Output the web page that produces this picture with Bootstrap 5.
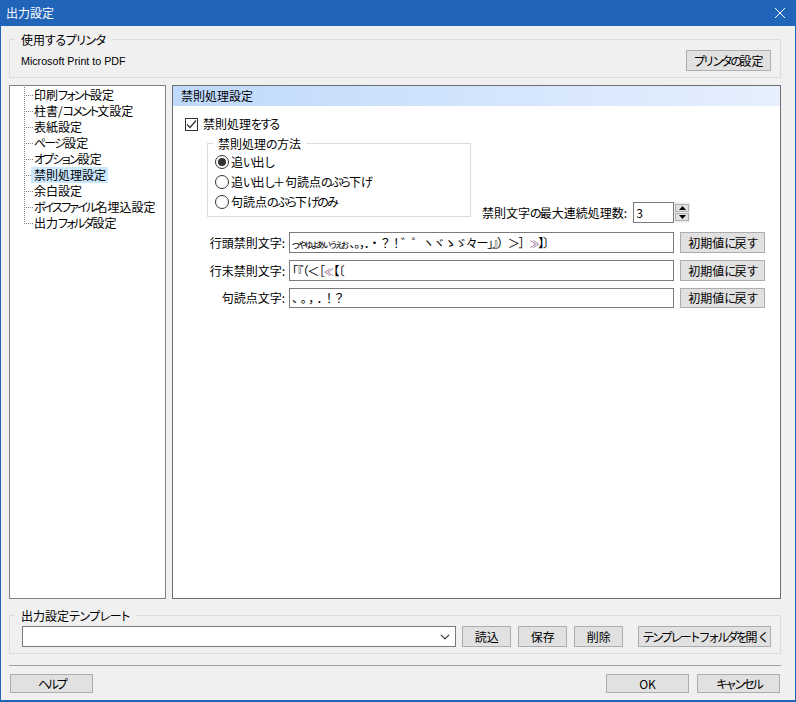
<!DOCTYPE html>
<html lang="ja">
<head>
    <meta charset="UTF-8" />
    <meta name="viewport" content="width=device-width, initial-scale=1.0" />
    <title>出力設定</title>
    <link href="https://cdn.jsdelivr.net/npm/bootstrap@5.3.3/dist/css/bootstrap.min.css" rel="stylesheet" />
    <style>
        html, body {
            margin: 0;
            height: 100%;
            overflow: hidden;
        }
        body {
            font-family: "Noto Sans CJK JP", "Liberation Sans", sans-serif;
            font-size: 12px;
            line-height: 16px;
            color: #000;
            background-color: #f0f0f0;
            font-feature-settings: "palt";
        }
        .kn {
            letter-spacing: -1.8px;
        }
        legend .kn {
            letter-spacing: -0.5px;
        }
        .btn-printer .kn {
            letter-spacing: -2.8px;
        }
        .btn-low .kn {
            letter-spacing: -3px;
        }
        .tmpl-wide .kn {
            letter-spacing: -2.6px;
        }
        .dlg-window {
            width: 796px;
            height: 702px;
            background-color: #f0f0f0;
            border: solid #2165b8;
            border-width: 0 1px 2px 1px;
        }
        .dlg-title {
            height: 26px;
            flex: none;
            margin: 0 -1px;
            padding: 0 11px 0 6px;
            background-color: #2165b8;
            color: #fff;
        }
        .dlg-body {
            flex: 1;
            min-height: 0;
            padding: 5px 14px 7px 8px;
        }
        .grp-box {
            min-width: 0;
            border: 1px solid #dcdcdc;
            padding: 0 9px 6px 12px;
        }
        .grp-box legend {
            float: none;
            width: auto;
            height: 16px;
            margin: 0 0 0 -7px;
            padding: 0 6px;
            font-size: 12px;
            line-height: 18px;
        }
        .grp-printer .btn-win {
            margin-top: 3px;
        }
        .print-name {
            margin: 6px 0 0 -1px;
            font-family: "Liberation Sans", sans-serif;
            font-size: 10.7px;
        }
        .btn-win {
            height: 21px;
            padding: 0;
            font-size: 12px;
            line-height: 19px;
            color: #000;
            background-color: #e1e1e1;
            border: 1px solid #adadad;
            border-radius: 0;
            white-space: nowrap;
        }
        .btn-win:hover {
            color: #000;
            background-color: #e1e1e1;
            border-color: #adadad;
        }
        .btn-printer {
            width: 85px;
        }
        .btn-low {
            height: 19px;
            line-height: 17px;
            width: 83px;
        }
        .panes {
            flex: 1;
            min-height: 0;
            margin-top: 7px;
            gap: 6px;
        }
        .pane-tree {
            width: 157px;
            flex: none;
            background-color: #fff;
            border: 1px solid #828282;
        }
        .tree-list {
            margin: 1px 0 0 14px;
            padding: 0;
            list-style: none;
        }
        .tree-list li {
            height: 16px;
            display: flex;
            align-items: center;
            background: repeating-linear-gradient(#808080 0 1px, transparent 1px 2px) no-repeat 0 0 / 1px 100%;
        }
        .tree-list li:last-child {
            background-size: 1px 50%;
        }
        .tree-list li::before {
            content: "";
            width: 9px;
            flex: none;
            border-top: 1px dotted #808080;
        }
        .tree-list li > span {
            padding: 0 2px 0 1px;
            white-space: nowrap;
        }
        .tree-list .on {
            background-color: #cce8ff;
            margin-left: -2px;
            padding-left: 3px;
        }
        .pane-main {
            flex: 1;
            background-color: #fff;
            border: 1px solid #6e6e6e;
        }
        .pane-head {
            height: 20px;
            padding-left: 8px;
            line-height: 20px;
            background: linear-gradient(to right, #bfd9fb, #e6f0fe);
        }
        .chk-row {
            margin: 12px 0 0 12px;
            height: 13px;
            gap: 5px;
        }
        .chk-row > span {
            margin-bottom: 2px;
        }
        .form-check-input.chk-box {
            width: 13px;
            height: 13px;
            margin: 0;
            flex: none;
            background-color: #fff;
            border: 1px solid #333;
            border-radius: 0;
            background-size: 13px;
            background-image: url("data:image/svg+xml,%3csvg xmlns='http://www.w3.org/2000/svg' viewBox='0 0 13 13'%3e%3cpath fill='none' stroke='%23333' stroke-width='1.2' d='M2 6.5l3 3 6-7'/%3e%3c/svg%3e");
        }
        .grp-method {
            width: 264px;
            flex: none;
            margin: 4px 0 6px 34px;
            padding: 0 8px 4px 7px;
            background-color: #fff;
        }
        .grp-method legend {
            margin-left: -2px;
            padding: 0 5px;
        }
        .radio-row {
            height: 20px;
            gap: 2px;
        }
        .radio-row:first-of-type {
            margin-top: 1px;
        }
        .form-check-input.rad-btn {
            width: 14px;
            height: 14px;
            margin: 0;
            flex: none;
            background-color: #fff;
            border: 1px solid #333;
            background-size: 14px;
            background-image: none;
        }
        .form-check-input.rad-btn:checked {
            background-image: url("data:image/svg+xml,%3csvg xmlns='http://www.w3.org/2000/svg' viewBox='0 0 14 14'%3e%3ccircle cx='7' cy='7' r='4' fill='%23333'/%3e%3c/svg%3e");
        }
        .spin-group {
            margin: 0 0 0 11px;
            gap: 6px;
        }
        .spin-input {
            width: 41px;
            height: 21px;
            flex: none;
        }
        .box-field {
            height: 21px;
            padding: 0 2px;
            font-size: 12px;
            line-height: 19px;
            color: #000;
            background-color: #fff;
            border: 1px solid #7a7a7a;
            border-radius: 0;
            white-space: nowrap;
            overflow: hidden;
        }
        .spin-btns {
            width: 16px;
            height: 21px;
            margin-left: -6px;
            padding: 2px 1px;
            background-color: #f0f0f0;
            gap: 1px;
        }
        .spin-btns span {
            flex: 1;
            background-color: #e1e1e1;
            border: 1px solid #adadad;
        }
        .txt-rows {
            margin: 9px 15px 0 0;
            gap: 7px;
        }
        .txt-label {
            width: 112px;
            flex: none;
            text-align: right;
        }
        .txt-row {
            gap: 4px;
        }
        .txt-row .box-field {
            flex: 1;
            min-width: 0;
        }
        .txt-row .btn-win {
            width: 85px;
            flex: none;
            margin-left: 2px;
        }
        .txt-row-low .box-field,
        .txt-row-low .btn-win {
            height: 20px;
            line-height: 18px;
        }
        .kana-small {
            font-size: 10px;
            letter-spacing: -1.7px;
            margin-right: 2px;
        }
        .punct-wide {
            font-feature-settings: normal;
            letter-spacing: -1.2px;
        }
        .brackets {
            letter-spacing: -0.8px;
        }
        .punct-open {
            letter-spacing: 2.5px;
        }
        .mark-tint {
            font-size: 10px;
            color: #8a5a80;
        }
        .grp-template {
            margin-top: 8px;
            padding: 3px 9px 6px 12px;
        }
        .tmpl-select {
            width: 435px;
            height: 21px;
            margin-right: -1px;
            padding: 0 20px 0 4px;
            font-size: 12px;
            border: 1px solid #7a7a7a;
            border-radius: 0;
            background-size: 12px 10px;
            background-position: right 4px center;
        }
        .tmpl-gap {
            gap: 7px;
        }
        .tmpl-btn {
            width: 49px;
            flex: none;
        }
        .tmpl-wide {
            width: 133px;
            margin-left: 8px;
        }
        .sep-line {
            margin: 11px 0 8px;
            opacity: 1;
            border: 0;
            border-top: 1px solid #a0a0a0;
            flex: none;
        }
        .foot-row {
            padding: 0 1px;
        }
    </style>
</head>
<body>
    <div class="dlg-window d-flex flex-column">
        <div class="dlg-title d-flex align-items-center justify-content-between">
            <span>出力設定</span>
            <svg width="10" height="10" viewBox="0 0 10 10"><path d="M0 0L10 10M10 0L0 10" stroke="#fff" stroke-width="1" fill="none"/></svg>
        </div>

        <div class="dlg-body d-flex flex-column">
            <fieldset class="grp-box grp-printer flex-none">
                <legend>使用するプリンタ</legend>
                <div class="d-flex justify-content-between align-items-start">
                    <span class="print-name">Microsoft Print to PDF</span>
                    <button type="button" class="btn btn-win btn-printer">プリンタの設定</button>
                </div>
            </fieldset>

            <div class="panes d-flex">
                <div class="pane-tree">
                    <ul class="tree-list" id="tree"></ul>
                </div>
                <div class="pane-main d-flex flex-column">
                    <div class="pane-head">禁則処理設定</div>
                    <div class="chk-row d-flex align-items-center">
                        <input class="form-check-input chk-box" type="checkbox" checked />
                        <span>禁則処理をする</span>
                    </div>
                    <div class="d-flex align-items-end">
                        <fieldset class="grp-box grp-method">
                            <legend>禁則処理の方法</legend>
                            <div class="radio-row d-flex align-items-center"><input class="form-check-input rad-btn" type="radio" name="m" checked /><span>追い出し</span></div>
                            <div class="radio-row d-flex align-items-center"><input class="form-check-input rad-btn" type="radio" name="m" /><span>追い出し＋句読点のぶら下げ</span></div>
                            <div class="radio-row d-flex align-items-center"><input class="form-check-input rad-btn" type="radio" name="m" /><span>句読点のぶら下げのみ</span></div>
                        </fieldset>
                        <div class="spin-group d-flex align-items-center">
                            <span>禁則文字の最大連続処理数:</span>
                            <div class="box-field spin-input">3</div>
                            <div class="spin-btns d-flex flex-column">
                                <span class="d-flex align-items-center justify-content-center"><svg width="7" height="4" viewBox="0 0 7 4"><path d="M3.5 0L7 4H0z" fill="#000"/></svg></span>
                                <span class="d-flex align-items-center justify-content-center"><svg width="7" height="4" viewBox="0 0 7 4"><path d="M0 0H7L3.5 4z" fill="#000"/></svg></span>
                            </div>
                        </div>
                    </div>
                    <div class="txt-rows d-flex flex-column">
                        <div class="txt-row d-flex align-items-center">
                            <span class="txt-label">行頭禁則文字:</span>
                            <div class="box-field"><span class="kana-small">っゃゅょぁぃぅぇぉ</span><span class="punct-wide">、。，．・？！゛゜ヽヾゝゞ々ー」』）＞］<span class="mark-tint">≫</span>】〕</span></div>
                            <button type="button" class="btn btn-win">初期値に戻す</button>
                        </div>
                        <div class="txt-row d-flex align-items-center">
                            <span class="txt-label">行末禁則文字:</span>
                            <div class="box-field"><span class="brackets">「『（＜［<span class="mark-tint">≪</span>【〔</span></div>
                            <button type="button" class="btn btn-win">初期値に戻す</button>
                        </div>
                        <div class="txt-row txt-row-low d-flex align-items-center">
                            <span class="txt-label">句読点文字:</span>
                            <div class="box-field"><span class="punct-open">、。，．！？</span></div>
                            <button type="button" class="btn btn-win">初期値に戻す</button>
                        </div>
                    </div>
                </div>
            </div>

            <fieldset class="grp-box grp-template flex-none">
                <legend>出力設定テンプレート</legend>
                <div class="d-flex tmpl-gap align-items-center">
                    <select class="form-select tmpl-select flex-none"><option></option></select>
                    <button type="button" class="btn btn-win tmpl-btn">読込</button>
                    <button type="button" class="btn btn-win tmpl-btn">保存</button>
                    <button type="button" class="btn btn-win tmpl-btn">削除</button>
                    <button type="button" class="btn btn-win tmpl-wide">テンプレートフォルダを開く</button>
                </div>
            </fieldset>

            <hr class="sep-line" />

            <div class="foot-row d-flex">
                <button type="button" class="btn btn-win btn-low">ヘルプ</button>
                <button type="button" class="btn btn-win btn-low ms-auto me-2">OK</button>
                <button type="button" class="btn btn-win btn-low">キャンセル</button>
            </div>
        </div>
    </div>

    <script>
        const treeItems = ["印刷フォント設定", "柱書/コメント文設定", "表紙設定", "ページ設定", "オプション設定", "禁則処理設定", "余白設定", "ボイスファイル名埋込設定", "出力フォルダ設定"];
        document.getElementById("tree").innerHTML = treeItems
            .map((name) => `<li><span class="${name === "禁則処理設定" ? "on" : ""}">${name}</span></li>`)
            .join("");

        // the reference font has narrow kana, so tighten only those runs
        function tightenKana(el) {
            el.childNodes.forEach((node) => {
                if (node.nodeType === 1 && !node.classList.contains("box-field")) {
                    tightenKana(node);
                } else if (node.nodeType === 3 && /[\u3040-\u30ff]/.test(node.textContent)) {
                    const holder = document.createElement("span");
                    holder.innerHTML = node.textContent.replace(/[\u3040-\u30ff]+/g, '<span class="kn">$&</span>');
                    node.replaceWith(holder);
                }
            });
        }
        tightenKana(document.querySelector(".dlg-window"));
    </script>
    <script src="https://cdn.jsdelivr.net/npm/bootstrap@5.3.3/dist/js/bootstrap.bundle.min.js"></script>
</body>
</html>
